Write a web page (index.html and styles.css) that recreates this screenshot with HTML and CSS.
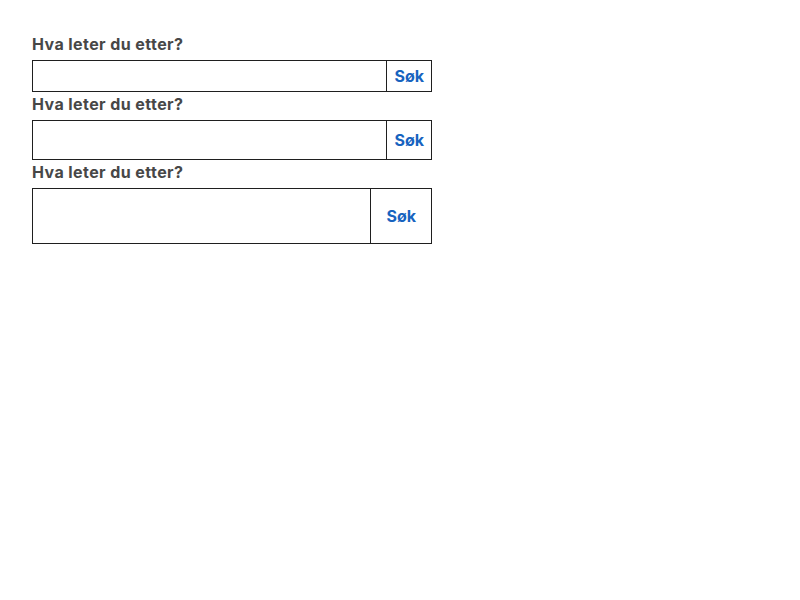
FILE: index.html
```html
<!DOCTYPE html>
<html lang="no">
<head>
<meta charset="utf-8">
<title>Søk</title>
<link rel="stylesheet" href="styles.css">
</head>
<body>
<main class="page">
  <form class="search search--sm">
    <label class="search__label" for="q1">Hva leter du etter?</label>
    <div class="search__box">
      <input class="search__input" id="q1" type="text">
      <button class="search__button" type="button">Søk</button>
    </div>
  </form>
  <form class="search search--md">
    <label class="search__label" for="q2">Hva leter du etter?</label>
    <div class="search__box">
      <input class="search__input" id="q2" type="text">
      <button class="search__button" type="button">Søk</button>
    </div>
  </form>
  <form class="search search--lg">
    <label class="search__label" for="q3">Hva leter du etter?</label>
    <div class="search__box">
      <input class="search__input" id="q3" type="text">
      <button class="search__button" type="button">Søk</button>
    </div>
  </form>
</main>
</body>
</html>
```
FILE: styles.css
```css
* {
  box-sizing: border-box;
}

html, body {
  margin: 0;
  padding: 0;
  background: #ffffff;
}

body {
  font-family: Inter, "Liberation Sans", sans-serif;
}

.page {
  padding: 32px;
  width: 464px;
}

.search {
  display: flex;
  flex-direction: column;
  margin: 0;
}

.search__label {
  display: block;
  font-size: 16px;
  line-height: 24px;
  font-weight: 700;
  letter-spacing: 0.42px;
  color: #474747;
  margin-bottom: 4px;
}

.search__box {
  display: flex;
  border: 1px solid #1f1f1f;
  background: #ffffff;
}

.search__input {
  flex: 1;
  min-width: 0;
  border: 0;
  margin: 0;
  padding: 0 8px;
  font-family: inherit;
  font-size: 16px;
  background: transparent;
  outline: none;
}

.search__button {
  border: 0;
  border-left: 1px solid #1f1f1f;
  background: #ffffff;
  margin: 0;
  padding: 0 7px;
  font-family: inherit;
  font-size: 16px;
  font-weight: 700;
  color: #1763bf;
  cursor: pointer;
}

.search--sm .search__box {
  height: 32px;
}

.search--md .search__box {
  height: 40px;
}

.search--lg .search__box {
  height: 56px;
}

.search--lg .search__button {
  padding: 0 15px;
}
```
